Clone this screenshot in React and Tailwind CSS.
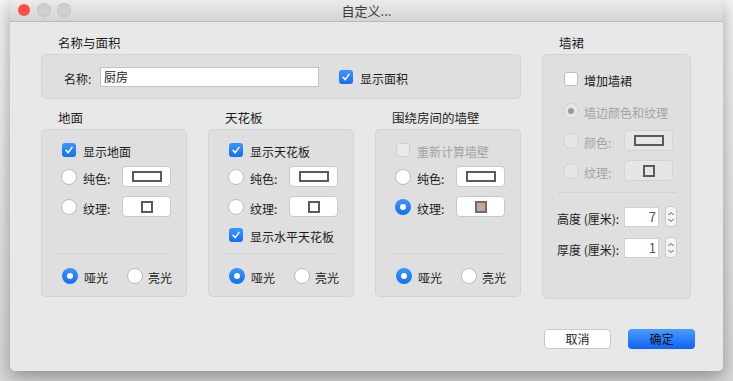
import React from 'react'

const Check = ({ on, disabled }) => (
  <span
    className={
      'flex h-[14px] w-[14px] shrink-0 items-center justify-center rounded-[3px] ' +
      (on
        ? 'bg-gradient-to-b from-[#3d95fb] to-[#0f6ff3]'
        : disabled
          ? 'border border-[#d0d0d0] bg-[#e9e9e9]'
          : 'border border-[#bdbdbd] bg-white')
    }
  >
    {on && (
      <svg width="10" height="10" viewBox="0 0 10 10">
        <path d="M2 5.3 L4.2 7.6 L8 2.4" fill="none" stroke="white" strokeWidth="1.6" strokeLinecap="round" strokeLinejoin="round" />
      </svg>
    )}
  </span>
)

const Radio = ({ on, disabled, dot }) => (
  <span
    className={
      'flex h-[16px] w-[16px] shrink-0 items-center justify-center rounded-full ' +
      (on
        ? 'bg-gradient-to-b from-[#3d95fb] to-[#0f6ff3]'
        : disabled
          ? 'border border-[#d2d2d2] bg-[#e6e6e6]'
          : 'border border-[#bdbdbd] bg-white')
    }
  >
    {on && <span className="h-[6px] w-[6px] rounded-full bg-white" />}
    {dot && <span className="h-[6px] w-[6px] rounded-full bg-[#9a9a9a]" />}
  </span>
)

const Swatch = ({ kind, disabled, fill }) => (
  <span
    className={
      'flex h-[21px] w-[49px] items-center justify-center rounded-[4px] border ' +
      (disabled ? 'border-[#d4d4d4] bg-[#e6e6e6]' : 'border-[#c9c9c9] bg-white')
    }
  >
    {kind === 'color' ? (
      <span className="h-[11px] w-[30px] border-2 border-[#5a5a5a]" />
    ) : (
      <span
        className={'h-[12px] w-[12px] border-2 ' + (fill ? 'border-[#6d6d6d] bg-[#c9a994]' : 'border-[#5a5a5a]')}
      />
    )}
  </span>
)

const Label = ({ children, gray }) => (
  <span className={'text-[12px] leading-none ' + (gray ? 'text-[#a3a3a3]' : 'text-[#1c1c1c]')}>{children}</span>
)

const SwatchRow = ({ on, label, kind, fill, className }) => (
  <div className={'flex h-[21px] items-center ' + className}>
    <Radio on={on} />
    <span className="ml-[6px] w-[39px]">
      <Label>{label}</Label>
    </span>
    <Swatch kind={kind} fill={fill} />
  </div>
)

const Finish = () => (
  <>
    <div className="mx-[15px] mt-auto h-px bg-[#d2d2d2]" />
    <div className="mb-[10px] mt-[12px] flex h-[20px] items-center pl-[20px]">
      <Radio on />
      <span className="ml-[6px] w-[43px]">
        <Label>哑光</Label>
      </span>
      <Radio />
      <span className="ml-[5px]">
        <Label>亮光</Label>
      </span>
    </div>
  </>
)

const Group = ({ title, className, children }) => (
  <div className="flex flex-col">
    <div className="ml-[17px] h-[17px] text-[12.5px] leading-none text-[#1c1c1c]">{title}</div>
    <div className={'flex flex-col rounded-[5px] border border-[#d4d4d4] bg-[#dfdfdf] ' + className}>{children}</div>
  </div>
)

const Stepper = () => (
  <span className="ml-[6px] flex h-[21px] w-[12px] flex-col items-center justify-center rounded-[4px] border border-[#cacaca] bg-[#f4f4f4]">
    <svg width="8" height="14" viewBox="0 0 8 14">
      <path d="M1.5 5 L4 2.5 L6.5 5 M1.5 9 L4 11.5 L6.5 9" fill="none" stroke="#555" strokeWidth="1" />
    </svg>
  </span>
)

export default function App() {
  return (
    <div
      className="h-[381px] w-[733px] overflow-hidden bg-gradient-to-b from-[#f4f4f4] to-[#d8d8d8] pl-[10px]"
      style={{ fontFamily: '"Noto Sans CJK SC", "Liberation Sans", sans-serif' }}
    >
      <div className="flex h-[371px] w-[713px] flex-col overflow-hidden rounded-b-[5px] rounded-t-[5px] bg-[#e8e8e8] shadow-[0_6px_18px_rgba(0,0,0,0.35)]">
        <div className="relative flex h-[22px] shrink-0 items-center justify-center border-b border-[#b9b9b9] bg-gradient-to-b from-[#ebebeb] to-[#d4d4d4]">
          <div className="absolute left-[8px] top-[4px] flex gap-[8px]">
            <span className="h-[12px] w-[12px] rounded-full bg-[#fc4e47]" />
            <span className="h-[12px] w-[12px] rounded-full bg-[#cfcfcf] ring-1 ring-[#c3c3c3]" />
            <span className="h-[12px] w-[12px] rounded-full bg-[#cfcfcf] ring-1 ring-[#c3c3c3]" />
          </div>
          <span className="text-[13px] leading-none text-[#3b3b3b]">自定义...</span>
        </div>

        <div className="flex pl-[31px] pt-[15px]">
          <div className="flex w-[480px] flex-col">
            <Group title="名称与面积" className="h-[45px] flex-row items-center">
              <span className="ml-[22px] w-[36px]">
                <Label>名称:</Label>
              </span>
              <span className="flex h-[20px] w-[219px] items-center border border-[#c3c3c3] bg-white pl-[3px]">
                <Label>厨房</Label>
              </span>
              <span className="ml-[20px]">
                <Check on />
              </span>
              <span className="ml-[7px]">
                <Label>显示面积</Label>
              </span>
            </Group>

            <div className="mt-[13px] flex gap-[21px]">
              <div className="w-[146px]">
                <Group title="地面" className="h-[168px]">
                  <div className="mt-[9px] flex h-[21px] items-center pl-[20px]">
                    <Check on />
                    <span className="ml-[7px]">
                      <Label>显示地面</Label>
                    </span>
                  </div>
                  <SwatchRow label="纯色:" kind="color" className="mt-[6px] pl-[19px]" />
                  <SwatchRow label="纹理:" kind="tex" className="mt-[9px] pl-[19px]" />
                  <Finish />
                </Group>
              </div>
              <div className="w-[146px]">
                <Group title="天花板" className="h-[168px]">
                  <div className="mt-[9px] flex h-[21px] items-center pl-[20px]">
                    <Check on />
                    <span className="ml-[7px]">
                      <Label>显示天花板</Label>
                    </span>
                  </div>
                  <SwatchRow label="纯色:" kind="color" className="mt-[6px] pl-[19px]" />
                  <SwatchRow label="纹理:" kind="tex" className="mt-[9px] pl-[19px]" />
                  <div className="mt-[7px] flex h-[21px] items-center pl-[20px]">
                    <Check on />
                    <span className="ml-[7px]">
                      <Label>显示水平天花板</Label>
                    </span>
                  </div>
                  <Finish />
                </Group>
              </div>
              <div className="w-[146px]">
                <Group title="围绕房间的墙壁" className="h-[168px]">
                  <div className="mt-[9px] flex h-[21px] items-center pl-[20px]">
                    <Check disabled />
                    <span className="ml-[7px]">
                      <Label gray>重新计算墙壁</Label>
                    </span>
                  </div>
                  <SwatchRow label="纯色:" kind="color" className="mt-[6px] pl-[19px]" />
                  <SwatchRow on label="纹理:" kind="tex" fill className="mt-[9px] pl-[19px]" />
                  <Finish />
                </Group>
              </div>
            </div>
          </div>

          <div className="ml-[21px] w-[149px]">
            <Group title="墙裙" className="h-[245px]">
              <div className="mt-[14px] flex h-[20px] items-center pl-[21px]">
                <Check />
                <span className="ml-[6px]">
                  <Label>增加墙裙</Label>
                </span>
              </div>
              <div className="mt-[12px] flex h-[20px] items-center pl-[20px]">
                <Radio disabled dot />
                <span className="ml-[5px]">
                  <Label gray>墙边颜色和纹理</Label>
                </span>
              </div>
              <div className="mt-[9px] flex h-[21px] items-center pl-[20px]">
                <Radio disabled />
                <span className="ml-[5px] w-[40px]">
                  <Label gray>颜色:</Label>
                </span>
                <Swatch kind="color" disabled />
              </div>
              <div className="mt-[9px] flex h-[21px] items-center pl-[20px]">
                <Radio disabled />
                <span className="ml-[5px] w-[40px]">
                  <Label gray>纹理:</Label>
                </span>
                <Swatch kind="tex" disabled />
              </div>
              <div className="mx-[14px] mt-[11px] h-px bg-[#d2d2d2]" />
              <div className="mt-[13px] flex h-[21px] items-center pl-[14px]">
                <span className="w-[67px]">
                  <Label>高度 (厘米):</Label>
                </span>
                <span className="flex h-[20px] w-[35px] items-center justify-end border border-[#d0d0d0] bg-white pr-[2px] text-[13px] text-[#555]">
                  7
                </span>
                <Stepper />
              </div>
              <div className="mt-[10px] flex h-[21px] items-center pl-[14px]">
                <span className="w-[67px]">
                  <Label>厚度 (厘米):</Label>
                </span>
                <span className="flex h-[20px] w-[35px] items-center justify-end border border-[#d0d0d0] bg-white pr-[2px] text-[13px] text-[#555]">
                  1
                </span>
                <Stepper />
              </div>
            </Group>
          </div>
        </div>

        <div className="mt-[30px] flex justify-end gap-[17px] pr-[28px]">
          <button className="flex h-[20px] w-[67px] items-center justify-center rounded-[4px] border border-[#c8c8c8] bg-white text-[12px] leading-none text-[#1c1c1c]">
            取消
          </button>
          <button className="flex h-[20px] w-[67px] items-center justify-center rounded-[4px] bg-gradient-to-b from-[#4a9bfd] to-[#0b62f6] text-[12px] leading-none text-[#111]">
            确定
          </button>
        </div>
      </div>
    </div>
  )
}
